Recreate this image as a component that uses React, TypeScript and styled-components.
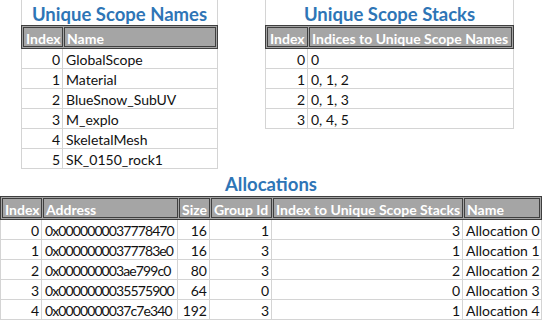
import styled, { createGlobalStyle } from "styled-components";

const GlobalStyle = createGlobalStyle`
  * { box-sizing: border-box; }
  html, body { margin: 0; padding: 0; background: #ffffff; }
  body {
    font-family: Lato, "Open Sans", sans-serif;
    font-size: 14px;
    color: #111111;
  }
`;

const DARK = "#3f3f3f";
const GRID = "#d4d4d4";
const HEAD = "#a5a5a5";

const Sheet = styled.div`
  width: 544px;
  height: 322px;
  overflow: hidden;
  display: flex;
  flex-direction: column;
`;

const TopRow = styled.div`
  display: flex;
  align-items: flex-start;
  gap: 47px;
  padding-left: 21px;
`;

const Block = styled.div<{ $width: number }>`
  width: ${(p) => p.$width}px;
  display: flex;
  flex-direction: column;
`;

const Title = styled.div<{ $framed?: boolean; $height: number }>`
  height: ${(p) => p.$height}px;
  display: flex;
  align-items: center;
  justify-content: center;
  padding-top: 2px;
  font-size: 18.5px;
  font-weight: 700;
  color: #2e75b6;
  white-space: nowrap;
  border-left: ${(p) => (p.$framed ? `1px solid ${GRID}` : "none")};
  border-right: ${(p) => (p.$framed ? `1px solid ${GRID}` : "none")};
`;

const Table = styled.table`
  width: 100%;
  table-layout: fixed;
  border-collapse: separate;
  border-spacing: 0;
`;

const Th = styled.th`
  padding: 1px 0 1px 1px;
  background: ${HEAD};
  border-top: 1px solid ${DARK};
  border-bottom: 1px solid ${DARK};
  font-weight: 700;
  color: #ffffff;
  text-align: left;

  &:first-child {
    border-left: 1px solid ${DARK};
  }
  &:last-child {
    border-right: 1px solid ${DARK};
    padding-right: 1px;
  }
`;

const HeadBox = styled.div`
  height: 20px;
  line-height: 19px;
  padding: 1px 2px 0;
  border: 1px solid ${DARK};
  white-space: nowrap;
  overflow: hidden;
`;

const Td = styled.td<{ $num?: boolean; $tight?: boolean }>`
  height: 20px;
  padding: 2px ${(p) => (p.$num ? "2px" : "3px")} 0 3px;
  border-right: 1px solid ${GRID};
  border-bottom: 1px solid ${GRID};
  text-align: ${(p) => (p.$num ? "right" : "left")};
  white-space: nowrap;
  overflow: hidden;
  line-height: 17px;
  letter-spacing: ${(p) => (p.$tight ? "-0.9px" : "0")};

  &:first-child {
    border-left: 1px solid ${GRID};
  }
`;

type Column = { label: string; width: number; num?: boolean; tight?: boolean };

function DataTable({ columns, rows }: { columns: Column[]; rows: (string | number)[][] }) {
  return (
    <Table>
      <colgroup>
        {columns.map((c) => (
          <col key={c.label} style={{ width: c.width }} />
        ))}
      </colgroup>
      <thead>
        <tr>
          {columns.map((c) => (
            <Th key={c.label}>
              <HeadBox>{c.label}</HeadBox>
            </Th>
          ))}
        </tr>
      </thead>
      <tbody>
        {rows.map((r, i) => (
          <tr key={i}>
            {r.map((v, j) => (
              <Td key={j} $num={columns[j].num} $tight={columns[j].tight}>
                {v}
              </Td>
            ))}
          </tr>
        ))}
      </tbody>
    </Table>
  );
}

const scopeNames = ["GlobalScope", "Material", "BlueSnow_SubUV", "M_explo", "SkeletalMesh", "SK_0150_rock1"];
const scopeStacks = ["0", "0, 1, 2", "0, 1, 3", "0, 4, 5"];
const allocations = [
  ["0x0000000037778470", 16, 1, 3],
  ["0x00000000377783e0", 16, 3, 1],
  ["0x000000003ae799c0", 80, 3, 2],
  ["0x0000000035575900", 64, 0, 0],
  ["0x0000000037c7e340", 192, 3, 1],
];

export default function App() {
  return (
    <Sheet>
      <GlobalStyle />
      <TopRow>
        <Block $width={197}>
          <Title $framed $height={25}>Unique Scope Names</Title>
          <DataTable
            columns={[
              { label: "Index", width: 42, num: true },
              { label: "Name", width: 155 },
            ]}
            rows={scopeNames.map((n, i) => [i, n])}
          />
        </Block>
        <Block $width={249}>
          <Title $framed $height={25}>Unique Scope Stacks</Title>
          <DataTable
            columns={[
              { label: "Index", width: 43, num: true },
              { label: "Indices to Unique Scope Names", width: 206 },
            ]}
            rows={scopeStacks.map((s, i) => [i, s])}
          />
        </Block>
      </TopRow>
      <Block $width={542}>
        <Title $height={27}>Allocations</Title>
        <DataTable
          columns={[
            { label: "Index", width: 42, num: true },
            { label: "Address", width: 136, tight: true },
            { label: "Size", width: 32, num: true },
            { label: "Group Id", width: 62, num: true },
            { label: "Index to Unique Scope Stacks", width: 191, num: true },
            { label: "Name", width: 79 },
          ]}
          rows={allocations.map((a, i) => [i, a[0], a[1], a[2], a[3], `Allocation ${i}`])}
        />
      </Block>
    </Sheet>
  );
}
